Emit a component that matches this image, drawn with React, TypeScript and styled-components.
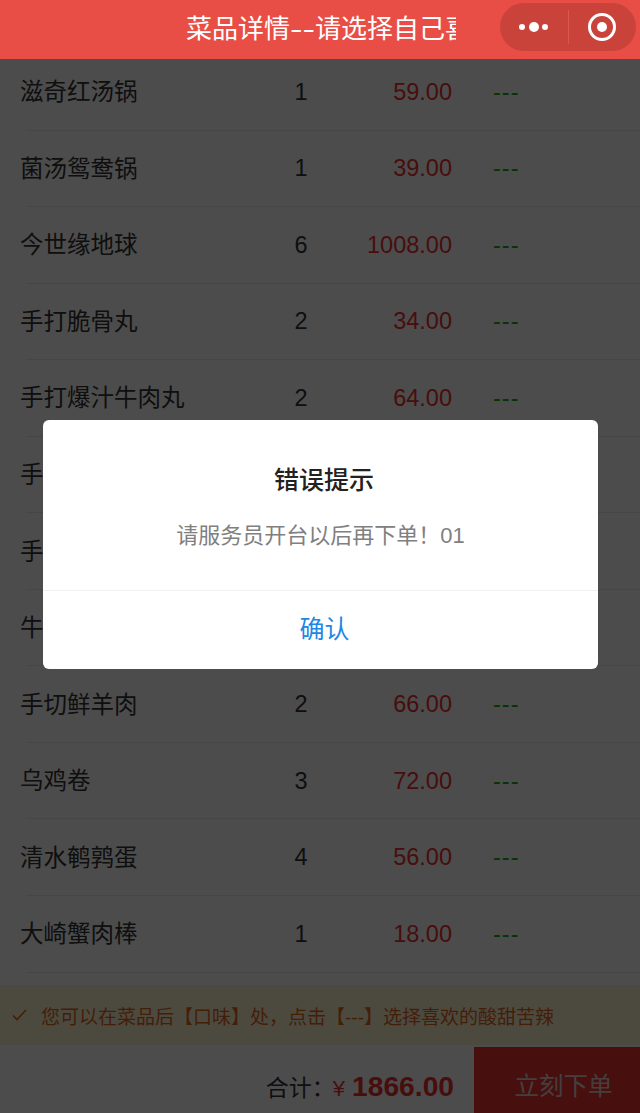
import React from 'react'
import styled, { createGlobalStyle } from 'styled-components'

const dishes = [
  { name: '滋奇红汤锅', qty: 1, price: '59.00' },
  { name: '菌汤鸳鸯锅', qty: 1, price: '39.00' },
  { name: '今世缘地球', qty: 6, price: '1008.00' },
  { name: '手打脆骨丸', qty: 2, price: '34.00' },
  { name: '手打爆汁牛肉丸', qty: 2, price: '64.00' },
  { name: '手工虾滑', qty: 2, price: '58.00' },
  { name: '手切肥牛', qty: 2, price: '76.00' },
  { name: '牛百叶', qty: 1, price: '38.00' },
  { name: '手切鲜羊肉', qty: 2, price: '66.00' },
  { name: '乌鸡卷', qty: 3, price: '72.00' },
  { name: '清水鹌鹑蛋', qty: 4, price: '56.00' },
  { name: '大崎蟹肉棒', qty: 1, price: '18.00' },
]

const App: React.FC = () => {
  return (
    <Page>
      <GlobalStyle />
      <Header>
        <Title>菜品详情<Dashes>--</Dashes>请选择自己喜欢的口味</Title>
        <Capsule>
          <CapsuleSide>
            <svg width="32" height="12" viewBox="0 0 32 12">
              <circle cx="4" cy="6" r="3" fill="#fff" />
              <circle cx="16" cy="6" r="5" fill="#fff" />
              <circle cx="27" cy="6" r="3" fill="#fff" />
            </svg>
          </CapsuleSide>
          <CapsuleDivider />
          <CapsuleSide>
            <svg width="30" height="30" viewBox="0 0 30 30">
              <circle cx="15" cy="15" r="12.5" fill="none" stroke="#fff" strokeWidth="3" />
              <circle cx="15" cy="15" r="5" fill="#fff" />
            </svg>
          </CapsuleSide>
        </Capsule>
      </Header>

      <Content>
        <List>
          {dishes.map((d) => (
            <Row key={d.name}>
              <DishName>{d.name}</DishName>
              <Qty>{d.qty}</Qty>
              <Price>{d.price}</Price>
              <Taste>---</Taste>
            </Row>
          ))}
        </List>
        <Tip>
          <svg width="15" height="12" viewBox="0 0 15 12">
            <path d="M1 6.5 L5 10.5 L14 1" fill="none" stroke="#e8641b" strokeWidth="1.6" />
          </svg>
          <TipText>您可以在菜品后【口味】处，点击【---】选择喜欢的酸甜苦辣</TipText>
        </Tip>
        <Footer>
          <Total>
            <TotalLabel>合计：</TotalLabel>
            <Yen>¥</Yen>
            <Amount>1866.00</Amount>
          </Total>
          <OrderButton>立刻下单</OrderButton>
        </Footer>

        <Mask>
          <Dialog>
            <DialogBody>
              <DialogTitle>错误提示</DialogTitle>
              <DialogText>请服务员开台以后再下单！01</DialogText>
            </DialogBody>
            <DialogAction>确认</DialogAction>
          </Dialog>
        </Mask>
      </Content>
    </Page>
  )
}

export default App

const GlobalStyle = createGlobalStyle`
html, body {
  margin: 0;
  padding: 0;
  background: #fff;
}
* {
  box-sizing: border-box;
}
`

const Page = styled.div`
width: 640px;
height: 1113px;
display: flex;
flex-direction: column;
overflow: hidden;
font-family: "Liberation Sans", "Noto Sans CJK SC", sans-serif;
color: #333;
`

const Header = styled.div`
height: 59px;
flex: none;
display: flex;
align-items: center;
padding: 0 4px 5px 186px;
background-color: #e84e45;
`

const Title = styled.div`
width: 270px;
margin-top: 3px;
overflow: hidden;
white-space: nowrap;
font-size: 26px;
line-height: 34px;
color: #fff;
`

const Dashes = styled.span`
display: inline-block;
width: 25px;
transform: scaleX(1.45);
transform-origin: left center;
`

const Capsule = styled.div`
margin-left: auto;
width: 136px;
height: 48px;
display: flex;
align-items: center;
border-radius: 24px;
background-color: #c9433b;
`

const CapsuleSide = styled.div`
flex: 1;
display: flex;
align-items: center;
justify-content: center;
`

const CapsuleDivider = styled.div`
width: 1px;
height: 34px;
background-color: #d8584f;
`

const Content = styled.div`
position: relative;
flex: 1;
min-height: 0;
display: flex;
flex-direction: column;
`

const List = styled.div`
flex: 1;
min-height: 0;
overflow: hidden;
margin-top: -5px;
`

const Row = styled.div`
position: relative;
height: 76.55px;
padding-left: 20px;
display: grid;
grid-template-columns: 260px 42px 130px auto;
align-items: center;
font-size: 23.5px;

&::after {
  content: "";
  position: absolute;
  left: 26px;
  right: 0;
  bottom: 0;
  height: 1px;
  background-color: #ececec;
}
`

const DishName = styled.div`
padding-bottom: 4px;
white-space: nowrap;
color: #333;
`

const Qty = styled.div`
text-align: center;
color: #333;
`

const Price = styled.div`
text-align: right;
color: #f03030;
`

const Taste = styled.div`
margin-left: 41px;
letter-spacing: 1px;
color: #12b012;
`

const Tip = styled.div`
flex: none;
height: 60px;
margin-bottom: 2px;
display: flex;
align-items: center;
gap: 14px;
padding-left: 12px;
background-color: #fdf9d2;
`

const TipText = styled.div`
font-size: 19px;
white-space: nowrap;
color: #e8641b;
`

const Footer = styled.div`
flex: none;
height: 66px;
display: flex;
justify-content: flex-end;
align-items: stretch;
background-color: #fff;
`

const Total = styled.div`
display: flex;
align-items: baseline;
padding: 22px 20px 0 0;
`

const TotalLabel = styled.span`
font-size: 23px;
color: #333;
`

const Yen = styled.span`
margin-right: 7px;
margin-left: -2px;
font-size: 22px;
color: #f03030;
`

const Amount = styled.span`
font-size: 28.2px;
font-weight: bold;
color: #f03030;
`

const OrderButton = styled.div`
width: 166px;
display: flex;
align-items: center;
justify-content: center;
padding: 9px 0 0 13px;
font-size: 24.5px;
color: #e8d0d0;
background-color: #f03535;
`

const Mask = styled.div`
position: absolute;
inset: 0;
display: flex;
justify-content: center;
align-items: flex-start;
padding: 361px 0 0 1px;
background-color: rgba(0, 0, 0, 0.7);
`

const Dialog = styled.div`
width: 555px;
height: 249px;
display: flex;
flex-direction: column;
border-radius: 6px;
overflow: hidden;
background-color: #fff;
`

const DialogBody = styled.div`
flex: 1;
display: flex;
flex-direction: column;
align-items: center;
padding-top: 42px;
border-bottom: 1px solid #f0f0f0;
`

const DialogTitle = styled.div`
padding-left: 7px;
font-size: 25px;
line-height: 36px;
font-weight: 500;
color: #222;
`

const DialogText = styled.div`
margin-top: 23px;
font-size: 22px;
line-height: 30px;
color: #808080;
`

const DialogAction = styled.div`
height: 78px;
flex: none;
display: flex;
align-items: center;
justify-content: center;
padding: 0 0 6px 8px;
font-size: 25px;
color: #1e88e5;
`
